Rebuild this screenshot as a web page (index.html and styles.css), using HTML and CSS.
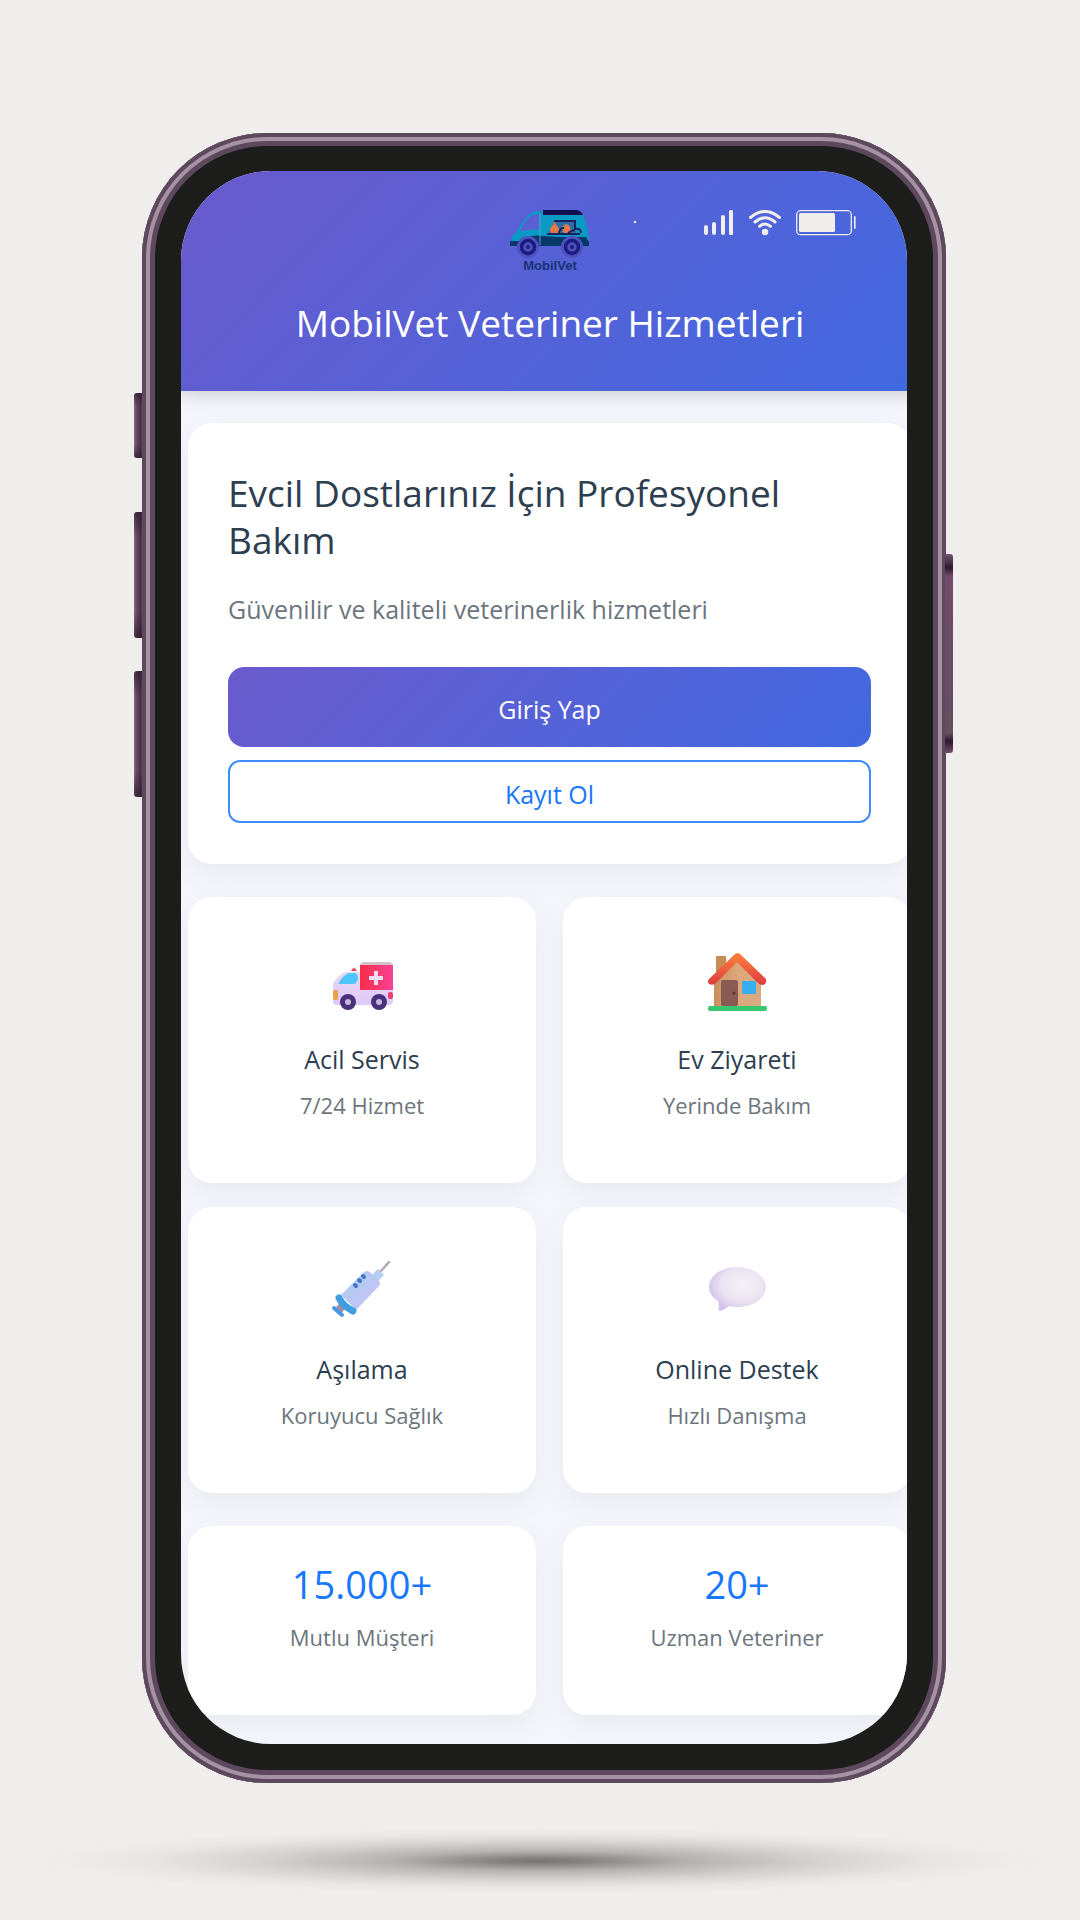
FILE: index.html
```html
<!DOCTYPE html>
<html lang="tr">
<head>
<meta charset="utf-8">
<meta name="viewport" content="width=device-width, initial-scale=1">
<title>MobilVet Veteriner Hizmetleri</title>
<link rel="stylesheet" href="styles.css">
</head>
<body>
<div class="stage">
  <div class="phone">
    <span class="key key-mute"></span>
    <span class="key key-up"></span>
    <span class="key key-down"></span>
    <span class="key key-power"></span>
    <div class="screen">
      <div class="status" aria-hidden="true">
        <svg class="signal" viewBox="0 0 30 26"><g fill="#efeeec"><rect x="0" y="15" width="4" height="10" rx="2"/><rect x="8" y="12" width="4" height="13" rx="2"/><rect x="17" y="5" width="4" height="20" rx="2"/><rect x="25" y="0" width="4" height="25" rx="1.5"/></g></svg>
        <svg class="wifi" viewBox="0 0 32 26"><g fill="none" stroke="#efeeec" stroke-width="3" stroke-linecap="round"><path d="M1.5 7.5Q16-4.500 30.500 7.500"/><path d="M6 12Q16 3.500 26 12"/><path d="M10.500 16.300Q16 11.600 21.500 16.300"/></g><circle cx="16" cy="22" r="3.300" fill="#efeeec"/></svg>
        <svg class="battery" viewBox="0 0 60 26"><rect x=".7" y=".7" width="54.600" height="24" rx="4" fill="none" stroke="#efeeec" stroke-width="1.300"/><rect x="3" y="3" width="36" height="19" rx="1.500" fill="#efeeec"/><rect x="58" y="6" width="1.600" height="13" rx=".8" fill="#efeeec"/></svg>
      </div>
      <span class="camera"></span>
      <div class="app">
        <header class="header">
          <svg class="logo" viewBox="0 0 84 68" role="img" aria-label="MobilVet">
            <path d="M3 36Q3 28 8 26Q16 12 22 7Q24 4 34 4H70Q78 9 80 24L81 36Z" fill="#0899c4"/>
            <path d="M12 24Q18 12 23 9Q26 7 31 7V22Z" fill="#5b5fd2"/>
            <path d="M2 34h9v5H2zM23 29q7-1 12 0l16 1h27l3 5v4H24z" fill="#063868"/>
            <path d="M35 3h32q6 0 8 5H35z" fill="#100d50"/>
            <path d="M32 7v31" stroke="#5b9fdb" stroke-width="1"/>
            <path d="M46 14h22v12H41q0-4 5-12" fill="#2b6fa8"/>
            <path d="M43 26q-3-5 2-8l1-4 3 5q4 3 1 7zM56 26q-4-5 0-8 4-2 6 2l1 6z" fill="#e27a4b"/>
            <path d="M39 27h33M46 14h21v8q6-1 6 4M51 26q1-5 5-5m4 5q5-3 7-3" fill="none" stroke="#18235c" stroke-width="2"/>
            <g fill="#4f51bd"><circle cx="20" cy="40" r="11"/><circle cx="64" cy="40" r="11"/></g>
            <g fill="none" stroke="#1b1b80" stroke-width="3.500"><circle cx="20" cy="40" r="6.500"/><circle cx="64" cy="40" r="6.500"/></g>
            <g fill="#1b1b80"><circle cx="20" cy="40" r="2"/><circle cx="64" cy="40" r="2"/></g>
            <text class="logo-text" x="42" y="63" text-anchor="middle">MobilVet</text>
          </svg>
          <h1 class="title">MobilVet Veteriner Hizmetleri</h1>
        </header>
        <main class="content">
          <section class="card hero">
            <h2 class="hero-title">Evcil Dostlarınız İçin Profesyonel Bakım</h2>
            <p class="hero-text">Güvenilir ve kaliteli veterinerlik hizmetleri</p>
            <button class="btn btn-primary" type="button">Giriş Yap</button>
            <button class="btn btn-outline" type="button">Kayıt Ol</button>
          </section>
          <section class="grid">
            <article class="card feature">
              <svg class="icon" viewBox="0 0 64 64" aria-hidden="true">
                <defs><linearGradient id="box"><stop offset="0" stop-color="#f52d46"/><stop offset="1" stop-color="#fb4196"/></linearGradient><linearGradient id="van" x2="0" y2="1"><stop offset="0" stop-color="#efdcf2"/><stop offset="1" stop-color="#dec9fa"/></linearGradient></defs>
                <path d="M3 31Q8 21 16 19H30V10Q31 9 33 9H60Q63 9 63 13V48Q63 52 58 52H6Q3 52 3 48Z" fill="url(#van)"/>
                <path d="M30 12l3-3h27l3 3z" fill="#d4c3c6"/><path d="M30 12H63V37H30Z" fill="url(#box)"/>
                <path d="M8 31q5-9 11-11h6q3 1 3 5-1 6-5 6z" fill="#4fc6fc"/><path d="M21 18q3-6 6 0z" fill="#e94558"/>
                <path d="M44 18h4v5h5v4h-5v5h-4v-5h-5v-4h5z" fill="#eedcf2"/>
                <rect x="3" y="37" width="5" height="10" rx="2" fill="#eda142"/><rect x="58" y="39" width="5" height="7" rx="2" fill="#ed3f76"/>
                <g fill="#49317b"><circle cx="18" cy="49" r="8"/><circle cx="49" cy="49" r="8"/></g><g fill="#c8b6dc"><circle cx="18" cy="49" r="3"/><circle cx="49" cy="49" r="3"/></g>
              </svg>
              <h3 class="feature-title">Acil Servis</h3>
              <p class="caption">7/24 Hizmet</p>
            </article>
            <article class="card feature">
              <svg class="icon" viewBox="0 0 64 64" aria-hidden="true">
                <defs><linearGradient id="wall"><stop offset="0" stop-color="#c98d5f"/><stop offset=".5" stop-color="#dfa77b"/><stop offset="1" stop-color="#d8ab82"/></linearGradient><linearGradient id="roof" x2="0" y2="1"><stop offset="0" stop-color="#ff823b"/><stop offset="1" stop-color="#dc3c40"/></linearGradient></defs>
                <rect x="11" y="3" width="10" height="24" rx="1" fill="#c88d57"/><path d="M9 28L32 7l24 21v26H9z" fill="url(#wall)"/>
                <path d="M32 0Q34 0 35 1L61 26Q62 31 58 32Q55 32 53 30L32 9 11 30Q8 33 4 31Q2 28 4 26L30 1Z" fill="url(#roof)"/>
                <rect x="16" y="27" width="17" height="26" rx="2" fill="#885b55"/><circle cx="29" cy="40" r="1.500" fill="#59332f"/>
                <rect x="37" y="28" width="14" height="13" rx="1" fill="#36aef4"/><rect x="3" y="53" width="59" height="5" rx="2" fill="#37c76f"/>
              </svg>
              <h3 class="feature-title">Ev Ziyareti</h3>
              <p class="caption">Yerinde Bakım</p>
            </article>
            <article class="card feature">
              <svg class="icon" viewBox="0 0 64 64" aria-hidden="true">
                <defs><linearGradient id="tube" x2="1" y2="1"><stop offset="0" stop-color="#a9cfeb"/><stop offset="1" stop-color="#c9c0fa"/></linearGradient></defs>
                <path d="M50 9L59 -1" stroke="#b8a7b5" stroke-width="2.500" stroke-linecap="round"/><path d="M44 12l4-4 4 4-4 4z" fill="#b8cdee" stroke="#b8cdee" stroke-width="3"/>
                <path d="M11 32L34 9q3-2 6 0l9 9q2 2 0 5L26 47z" fill="url(#tube)"/>
                <path d="M25 22l1 1m3-6 1 1m3-5 1 1" stroke="#4275c7" stroke-width="4" stroke-linecap="round"/>
                <path d="M14 41l-6 7" stroke="#a98ca0" stroke-width="8"/><path d="M9 35Q13 43 23 48" fill="none" stroke="#409fe3" stroke-width="7" stroke-linecap="round"/><path d="M4 45l8 7" stroke="#469be0" stroke-width="4" stroke-linecap="round"/>
              </svg>
              <h3 class="feature-title">Aşılama</h3>
              <p class="caption">Koruyucu Sağlık</p>
            </article>
            <article class="card feature">
              <svg class="icon" viewBox="0 0 64 64" aria-hidden="true">
                <defs><radialGradient id="bubble" cx=".6" cy=".4" r=".65"><stop offset="0" stop-color="#f5f2f7"/><stop offset=".6" stop-color="#eae2f2"/><stop offset="1" stop-color="#cfc0e7"/></radialGradient></defs>
                <path d="M32 4C49 4 61 14 61 24C61 35 48 44 33 44Q28 44 24 43Q20 47 15 48Q13 48 14 45L13 38C7 34 4 30 4 24C4 13 16 4 32 4Z" fill="url(#bubble)"/>
              </svg>
              <h3 class="feature-title">Online Destek</h3>
              <p class="caption">Hızlı Danışma</p>
            </article>
          </section>
          <section class="grid">
            <article class="card stat"><strong class="number">15.000+</strong><p class="caption">Mutlu Müşteri</p></article>
            <article class="card stat"><strong class="number">20+</strong><p class="caption">Uzman Veteriner</p></article>
          </section>
        </main>
      </div>
    </div>
  </div>
  <div class="ground"></div>
</div>
</body>
</html>
```
FILE: styles.css
```css
* { box-sizing: border-box; }
body {
  margin: 0;
  min-height: 100vh;
  background: #efeeec;
  font-family: "Segoe UI", "Open Sans", "Noto Sans", sans-serif;
  color: #2c3e50;
}
h1, h2, h3, p { margin: 0; font-weight: 400; }
.stage { padding: 133px 40px 0; }
.phone {
  position: relative;
  margin: 0 94px 0 102px;
  padding: 38px 39px 39px;
  border-radius: 125px;
  background: #1d1d1b;
  box-shadow: inset 0 0 0 4px #5e485d, inset 0 0 0 8px #a593a3, inset 0 0 0 13px #5e485d;
}
.key {
  position: absolute;
  left: -8px;
  width: 8px;
  border-radius: 3px 0 0 3px;
  background:
    linear-gradient(rgba(44, 27, 44, 0.7), transparent 20%, transparent 80%, rgba(44, 27, 44, 0.7)),
    linear-gradient(90deg, #82697f, #684663 35%, #4b304a 80%, #5e405b);
}
.key-mute { top: 260px; height: 65px; }
.key-up { top: 379px; height: 126px; }
.key-down { top: 538px; height: 126px; }
.key-power {
  top: 421px;
  left: auto;
  right: -7px;
  height: 199px;
  border-radius: 0 3px 3px 0;
  background: linear-gradient(#70566e, #2c1b2c 7%, #724b6c 11%, #645060 90%, #2c1b2c 94%, #744d70);
}
.screen {
  position: relative;
  overflow: hidden;
  border-radius: 90px;
  background: #f4f6fb;
}
.status {
  position: absolute;
  z-index: 2;
  top: 39px;
  right: 51px;
  display: flex;
  gap: 15px;
}
.status svg { height: 26px; }
.signal { width: 30px; }
.wifi { width: 32px; }
.battery { width: 60px; }
.camera {
  position: absolute;
  z-index: 2;
  top: 50px;
  left: 453px;
  width: 2px;
  height: 2px;
  background: #fff;
}
.app { margin-right: -12px; }
.header {
  position: relative;
  display: flex;
  flex-direction: column;
  align-items: center;
  gap: 24px;
  padding: 36px 0 44px;
  background: linear-gradient(135deg, #6a5acd, #4169e1);
  box-shadow: 0 4px 16px rgba(0, 0, 0, 0.16);
}
.logo { width: 84px; height: 68px; }
.logo-text { font: 700 13px "Liberation Sans", Arial, sans-serif; fill: #173374; }
.title { font-size: 37px; line-height: 48px; color: #fff; }
.content {
  display: flex;
  flex-direction: column;
  gap: 33px;
  padding: 32px 8px 29px 7px;
}
.card {
  border-radius: 24px;
  background: #fff;
  box-shadow: 0 10px 30px rgba(0, 0, 0, 0.05);
}
.hero {
  display: flex;
  flex-direction: column;
  padding: 46px 40px 41px;
}
.hero-title { font-size: 37px; line-height: 47px; }
.hero-text { margin: 26px 0 38px; font-size: 25px; line-height: 40px; color: #6c757d; }
.btn {
  padding: 4px 0 0;
  font: inherit;
  font-size: 25px;
  line-height: 36px;
  cursor: pointer;
}
.btn-primary {
  height: 80px;
  margin-bottom: 13px;
  border: 0;
  border-radius: 16px;
  background: linear-gradient(135deg, #6a5acd, #4169e1);
  color: #fff;
}
.btn-outline {
  height: 63px;
  border: 2px solid #3f8cfb;
  border-radius: 12px;
  background: #fff;
  color: #1877ff;
}
.grid {
  display: grid;
  grid-template-columns: 1fr 1fr;
  gap: 24px 27px;
}
.feature, .stat {
  display: flex;
  flex-direction: column;
  align-items: center;
  text-align: center;
}
.feature { padding: 56px 0 60px; }
.icon { width: 64px; height: 64px; overflow: visible; }
.feature-title { margin: 24px 0 10px; font-size: 25px; line-height: 36px; }
.caption { font-size: 22px; line-height: 36px; color: #6c757d; }
.stat { padding: 34px 0 60px; gap: 11px; }
.number { font-size: 38px; font-weight: 400; line-height: 48px; color: #1877ff; }
.ground {
  height: 66px;
  margin-top: 45px;
  background: radial-gradient(closest-side, #757473, #8b8a89 12%, #b4b3b1 30%, #d3d2d0 55%, #e8e7e5 80%, #efeeec);
}
```
